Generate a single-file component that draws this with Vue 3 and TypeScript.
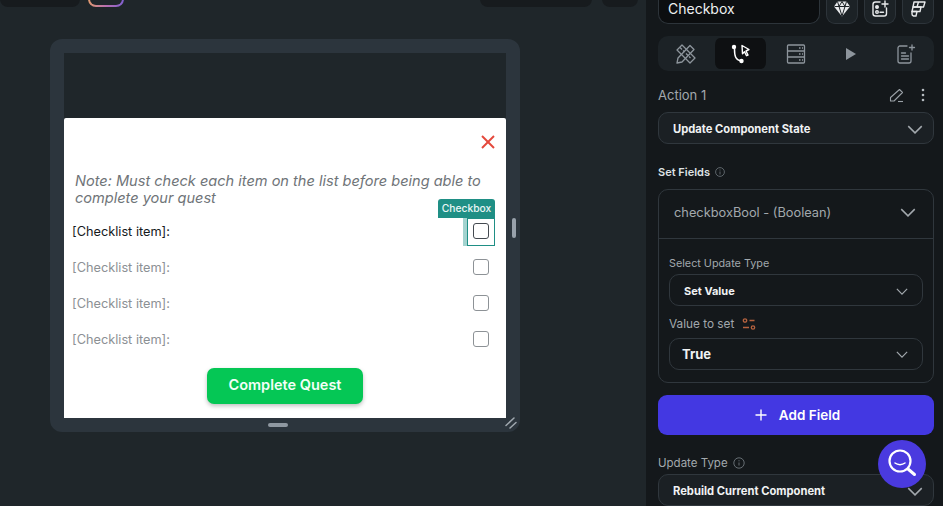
<script setup lang="ts">
import { ref } from 'vue'

interface CheckItem { id: number; label: string; active: boolean }

const items = ref<CheckItem[]>([
  { id: 1, label: '[Checklist item]:', active: true },
  { id: 2, label: '[Checklist item]:', active: false },
  { id: 3, label: '[Checklist item]:', active: false },
  { id: 4, label: '[Checklist item]:', active: false },
])
const tabs = ['design', 'actions', 'backend', 'play', 'notes']
const activeTab = ref('actions')
</script>

<template>
  <div class="app">
    <main class="canvas">
      <div class="toolbar">
        <div class="tool-left">
          <div class="pill dark wide-left"></div>
          <div class="pill gradient"></div>
        </div>
        <div class="tool-right">
          <div class="pill dark wide-right"></div>
          <div class="pill dark small"></div>
        </div>
      </div>

      <div class="device">
        <div class="screen">
          <div class="modal">
            <div class="close-row">
              <svg class="close" viewBox="0 0 14 14" fill="none" stroke="currentColor" stroke-width="1.9"><line x1="1" y1="1" x2="13" y2="13" /><line x1="13" y1="1" x2="1" y2="13" /></svg>
            </div>
            <div class="note">
              <span>Note: Must check each item on the list before being able to</span>
              <span>complete your quest</span>
            </div>
            <div v-for="item in items" :key="item.id" class="check-row" :class="{ active: item.active }">
              <span>{{ item.label }}</span>
              <div class="check-wrap">
                <div class="check"></div>
                <template v-if="item.active">
                  <div class="sel-box"></div>
                  <div class="sel-bar"></div>
                  <div class="sel-tag">Checkbox</div>
                </template>
              </div>
            </div>
            <button class="quest-btn">Complete Quest</button>
          </div>
        </div>
        <div class="side-handle"></div>
        <div class="bottom-handle"></div>
        <svg class="resize" viewBox="0 0 12 12" fill="none" stroke="#a0a8af" stroke-width="1.500" stroke-linecap="round"><line x1="1" y1="8.500" x2="9" y2="1" /><line x1="5" y1="11" x2="11" y2="5.500" /></svg>
      </div>
    </main>

    <aside class="panel">
      <div class="name-row">
        <div class="name-input">Checkbox</div>
        <div class="icon-btn">
          <svg width="18" height="18" viewBox="0 0 18 18"><path d="M4.500 1.500h9L17 6.500 9 16.500 1 6.500z" fill="#e8eaec" /><path d="M1.500 6.500h15M6 6.500l3 9.500 3-9.500M4.500 1.500l1.500 5 3-5 3 5 1.500-5" fill="none" stroke="#1b2125" stroke-width="1" /></svg>
        </div>
        <div class="icon-btn">
          <svg width="18" height="18" viewBox="0 0 18 18" fill="none" stroke="#e8eaec" stroke-width="1.400" stroke-linecap="round"><path d="M9 2H4.500A2.500 2.500 0 0 0 2 4.500v9A2.500 2.500 0 0 0 4.500 16h8.500a2.500 2.500 0 0 0 2.500-2.500V8" /><path d="M14 1v6M11 4h6" /><circle cx="6" cy="7" r="1.300" fill="#e8eaec" /><circle cx="6" cy="12" r="1.300" /><path d="M9 12.200h3.500" /></svg>
        </div>
        <div class="icon-btn">
          <svg width="18" height="18" viewBox="0 0 18 18" fill="none" stroke="#e8eaec" stroke-width="1.400" stroke-linejoin="round"><path d="M5 2h11l-1.500 5H4z" /><path d="M9.500 2 8 7" /><path d="M4 7h8l-1 4.500H3z" /><path d="M3 11.500h5L7 16H4.500A2 2 0 0 1 3 14z" /></svg>
        </div>
      </div>

      <div class="tabs">
        <div v-for="t in tabs" :key="t" class="tab" :class="{ on: t === activeTab }">
          <svg v-if="t === 'design'" width="22" height="22" viewBox="0 0 22 22" fill="none" stroke="#8d959c" stroke-width="1.300" stroke-linejoin="round"><path d="M2 7 7 2l13 13-5 5z" /><path d="M5 4.500l2 2M8 7.500l1.500 1.500M11 10.500l2 2M14 13.500l1.500 1.500" /><path d="M15 2.500l4 4L7 19l-5 1 1-5z" /></svg>
          <svg v-else-if="t === 'actions'" width="20" height="22" viewBox="0 0 20 22" fill="none" stroke="#fff" stroke-width="1.500" stroke-linecap="round"><circle cx="3" cy="4" r="2.200" fill="#fff" stroke="none" /><circle cx="10.500" cy="18" r="2.200" fill="#fff" stroke="none" /><path d="M3.500 6c0 7 1 11 6.500 12" /><path d="M11 2.500l7 4-3 1.500 2 4-1.500.7-2-4-2 2z" stroke-width="1.400" stroke-linejoin="round" /></svg>
          <svg v-else-if="t === 'backend'" width="20" height="20" viewBox="0 0 20 20" fill="none" stroke="#8d959c" stroke-width="1.300"><rect x="1.500" y="1" width="17" height="18" rx="1" /><path d="M1.500 7h17M1.500 13h17" /><path d="M13 4h1.500M16 4h1M13 10h1.500M16 10h1M13 16h1.500M16 16h1" stroke-width="1.500" /></svg>
          <svg v-else-if="t === 'play'" width="12" height="14" viewBox="0 0 12 14"><path d="M1 1l10 6-10 6z" fill="#8d959c" /></svg>
          <svg v-else width="20" height="20" viewBox="0 0 20 20" fill="none" stroke="#8d959c" stroke-width="1.300" stroke-linecap="round"><path d="M11 2H4a2 2 0 0 0-2 2v13a2 2 0 0 0 2 2h9a2 2 0 0 0 2-2V9" /><path d="M16 1v5M13.500 3.500h5" /><path d="M5.500 9h4M5.500 12h7M5.500 15h7" /></svg>
        </div>
      </div>

      <div class="action-head">
        <span>Action 1</span>
        <div class="action-icons">
          <svg width="15" height="15" viewBox="0 0 15 15" fill="none" stroke="#9aa1a7" stroke-width="1.100" stroke-linejoin="round"><path d="M10.500 1.500l3 3L5 13H1.500v-3.500z" /><path d="M9 13.500h5" /></svg>
          <svg width="4" height="14" viewBox="0 0 4 14" fill="#b4babf"><circle cx="2" cy="2" r="1.300" /><circle cx="2" cy="7" r="1.300" /><circle cx="2" cy="12" r="1.300" /></svg>
        </div>
      </div>

      <div class="select top-select">
        <span>Update Component State</span>
        <svg class="chev big" viewBox="0 0 14 8" fill="none" stroke="currentColor" stroke-width="1.300"><path d="M1 1l6 6 6-6" /></svg>
      </div>

      <div class="label-row set-fields">
        <b>Set Fields</b>
        <svg width="10" height="10" viewBox="0 0 10 10" fill="none" stroke="#6f777d" stroke-width=".8"><circle cx="5" cy="5" r="4.400" /><path d="M5 4.500v3M5 2.500v1" /></svg>
      </div>

      <div class="card">
        <div class="card-head">
          <span>checkboxBool - (Boolean)</span>
          <svg class="chev big" viewBox="0 0 14 8" fill="none" stroke="currentColor" stroke-width="1.300"><path d="M1 1l6 6 6-6" /></svg>
        </div>
        <div class="card-body">
          <div class="small-label">Select Update Type</div>
          <div class="select dark-select">
            <span>Set Value</span>
            <svg class="chev" viewBox="0 0 14 8" fill="none" stroke="currentColor" stroke-width="1.400"><path d="M1 1l6 6 6-6" /></svg>
          </div>
          <div class="value-label">
            <span>Value to set</span>
            <svg width="14" height="14" viewBox="0 0 14 14" fill="none" stroke="#b5623f" stroke-width="1.300"><circle cx="3" cy="3.500" r="1.700" /><path d="M7.500 3.500h5M1 10.500h6" /><circle cx="11" cy="10.500" r="1.700" /></svg>
          </div>
          <div class="select dark-select true-select">
            <span>True</span>
            <svg class="chev" viewBox="0 0 14 8" fill="none" stroke="currentColor" stroke-width="1.400"><path d="M1 1l6 6 6-6" /></svg>
          </div>
        </div>
      </div>

      <button class="add-btn">
        <svg width="12" height="12" viewBox="0 0 12 12" stroke="#fff" stroke-width="1.400"><path d="M6 .5v11M.5 6h11" /></svg>
        <span>Add Field</span>
      </button>

      <div class="label-row update-type">
        <span>Update Type</span>
        <svg width="12" height="12" viewBox="0 0 12 12" fill="none" stroke="#6f777d" stroke-width=".9"><circle cx="6" cy="6" r="5.200" /><path d="M6 5.500v3M6 3.200v1.100" /></svg>
      </div>

      <div class="select top-select">
        <span>Rebuild Current Component</span>
        <svg class="chev big" viewBox="0 0 14 8" fill="none" stroke="currentColor" stroke-width="1.300"><path d="M1 1l6 6 6-6" /></svg>
      </div>

      <div class="fab">
        <svg width="30" height="30" viewBox="0 0 30 30" fill="none" stroke="#fff" stroke-linecap="round"><circle cx="13" cy="12" r="10.500" stroke-width="2.200" /><path d="M21 20l6.500 5.500" stroke-width="3" /><path d="M8 14c2.800 2.200 7.200 2.200 10 0" stroke-width="1.500" /></svg>
      </div>
    </aside>
  </div>
</template>

<style scoped>
.app { display: flex; width: 943px; height: 506px; overflow: hidden; font-family: Inter, "Liberation Sans", sans-serif; background: #1f262a; }
.canvas { flex: 0 0 647px; border-right: 1px solid #14181b; box-sizing: border-box; }

.toolbar { display: flex; justify-content: space-between; height: 7px; padding-right: 8px; overflow: hidden; align-items: flex-end; }
.tool-left, .tool-right { display: flex; align-items: flex-end; }
.pill { height: 24px; flex-shrink: 0; border-radius: 8px; }
.dark { background: #171b1e; }
.wide-left { width: 80px; }
.gradient { width: 36px; margin-left: 8px; box-sizing: border-box; border: 2px solid transparent; background: linear-gradient(#1f262a, #1f262a) padding-box, linear-gradient(90deg, #e09a6e, #b86fb0, #7f5fd0) border-box; }
.wide-right { width: 112px; }
.small { width: 36px; margin-left: 10px; }

.device { position: relative; width: 442px; height: 365px; margin: 32px 0 0 50px; border: 14px solid #2c353d; border-radius: 12px; background: #1f262a; }
.screen { height: 100%; padding-top: 65px; box-sizing: border-box; }
.modal { display: flex; flex-direction: column; height: 300px; background: #fff; border-radius: 2px 2px 0 0; }
.close-row { display: flex; justify-content: flex-end; height: 48px; padding: 17px 11px 0 0; box-sizing: border-box; }
.close { width: 14px; height: 14px; color: #e4483c; }
.note { display: flex; flex-direction: column; align-items: flex-start; margin: 7px 11px 6px; font-size: 14.550px; font-style: italic; line-height: 17px; color: #6f7478; white-space: nowrap; }
.check-row { display: flex; align-items: center; justify-content: space-between; height: 36px; padding: 0 17px 0 8px; font-size: 12.750px; color: #8c9094; }
.check-row.active { color: #15191c; }
.check-wrap { position: relative; width: 16px; height: 16px; }
.check { width: 16px; height: 16px; box-sizing: border-box; border: 1.500px solid #8d9296; border-radius: 3px; }
.active .check { border-color: #444a50; }
.sel-box { position: absolute; left: -6px; top: -5px; width: 28px; height: 28px; box-sizing: border-box; border: 1.500px solid #1f8f85; }
.sel-bar { position: absolute; left: -10px; top: -5px; width: 4px; height: 28px; background: #a3d3cf; }
.sel-tag { position: absolute; right: -6px; top: -24px; width: 57px; height: 19px; line-height: 19px; text-align: center; background: #1f8f85; color: #e9f6f5; font-size: 10.300px; font-weight: 500; border-radius: 3px 3px 0 0; }
.quest-btn { align-self: center; width: 156px; height: 36px; margin-top: 11px; padding: 0 0 3px; border: 0; border-radius: 7px; background: #05c755; color: #f2fff7; font: 600 14.500px Inter, "Liberation Sans", sans-serif; box-shadow: 0 2px 4px rgba(0, 0, 0, .25); }

.side-handle { position: absolute; right: -10px; top: 165px; width: 4px; height: 20px; border-radius: 2px; background: #98a1ab; }
.bottom-handle { position: absolute; left: 204px; bottom: -9px; width: 20px; height: 4px; border-radius: 2px; background: #8f98a1; }
.resize { position: absolute; right: -11px; bottom: -11px; width: 12px; height: 12px; }

.panel { position: relative; flex: 1; padding: 0 9px 0 11px; background: #14181b; min-width: 0; }
.name-row { display: flex; align-items: stretch; gap: 6px; height: 24px; }
.name-input { flex: 0 0 162px; box-sizing: border-box; padding: 0 9px; line-height: 18.500px; font-size: 14px; color: #eef0f1; background: #0c0e10; border: 1px solid #2d343a; border-top: 0; border-radius: 0 0 10px 10px; }
.icon-btn { flex: 0 0 32px; display: flex; align-items: center; justify-content: center; box-sizing: border-box; background: #1c2226; border: 1px solid #2d343a; border-top: 0; border-radius: 0 0 9px 9px; overflow: hidden; }
.icon-btn svg { flex-shrink: 0; margin-top: -5px; }
.tabs { display: flex; height: 35px; margin-top: 12px; padding: 2px 0; box-sizing: border-box; background: #1c2226; border-radius: 10px; }
.tab { flex: 0 0 20%; box-sizing: border-box; display: flex; align-items: center; justify-content: center; }
.tab.on { background: #0e1012 content-box; padding: 0 2px; border-radius: 7px; }

.action-head { display: flex; align-items: center; justify-content: space-between; height: 20px; margin-top: 14px; padding-right: 9px; font-size: 13px; color: #a2a8ad; }
.action-icons { display: flex; align-items: center; gap: 17px; }
.select { display: flex; align-items: center; justify-content: space-between; box-sizing: border-box; border: 1px solid #30373d; border-radius: 10px; color: #f0f2f3; font-weight: 700; }
.top-select { height: 32px; padding: 2px 10px 0 14px; background: #1b2024; font-size: 11.200px; }
.action-head + .top-select { margin-top: 7px; }
.chev { width: 12px; height: 7px; color: #a2a8ad; }
.chev.big { width: 16px; height: 9px; }

.label-row { display: flex; align-items: center; gap: 5px; height: 14px; }
.set-fields { margin-top: 21px; font-size: 11px; color: #dfe2e4; }
.set-fields b { font-weight: 600; }
.card { margin-top: 10px; height: 194px; box-sizing: border-box; border: 1px solid #30373d; border-radius: 10px; }
.card-head { display: flex; align-items: center; justify-content: space-between; height: 49px; box-sizing: border-box; padding: 0 17px 4px 15px; border-bottom: 1px solid #30373d; font-size: 12.800px; color: #a2a8ad; }
.card-body { padding: 18px 10px 0; }
.small-label { height: 14px; line-height: 14px; font-size: 10.800px; color: #a2a8ad; }
.dark-select { height: 32px; margin-top: 3px; padding: 2px 14px 0; font-size: 11px; }
.value-label { display: flex; align-items: center; gap: 8px; height: 16px; margin-top: 10px; font-size: 11.800px; color: #a2a8ad; }
.true-select { margin-top: 6px; padding: 0 14px 0 12px; font-size: 13px; }

.add-btn { display: flex; align-items: center; justify-content: center; gap: 12px; width: 100%; height: 40px; margin-top: 12px; padding: 0 0 0 3px; border: 0; border-radius: 9px; background: #4338e2; color: #fff; font: 600 13.500px Inter, "Liberation Sans", sans-serif; }
.update-type { margin-top: 21px; font-size: 11.500px; color: #a2a8ad; }
.update-type + .top-select { margin-top: 4px; }

.fab { position: absolute; left: 231px; top: 440px; display: flex; align-items: center; justify-content: center; width: 48px; height: 48px; border-radius: 50%; background: #4a3adf; }
</style>
